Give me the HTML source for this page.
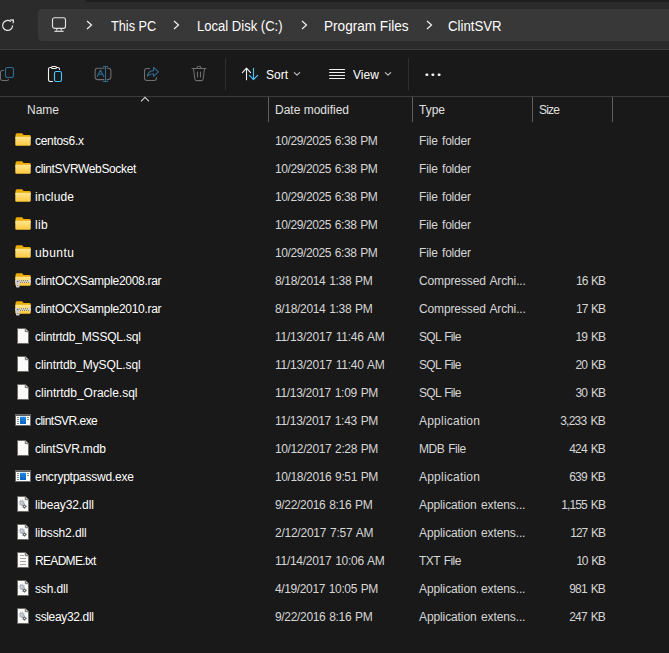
<!DOCTYPE html>
<html><head><meta charset="utf-8">
<style>
*{margin:0;padding:0;box-sizing:border-box}
html,body{width:669px;height:653px;overflow:hidden;background:#191919;font-family:"Liberation Sans",sans-serif;color:#fff}
.abs{position:absolute}
#top{position:absolute;left:0;top:0;width:669px;height:50px;background:#2b2b2b}
#topstrip{position:absolute;left:86px;top:0;width:583px;height:2px;background:#1f1f1f}
#topline{position:absolute;left:0;top:49px;width:669px;height:1px;background:#3a3a3a}
#addr{position:absolute;left:38px;top:9px;width:640px;height:32px;background:#383838;border-radius:4px}
.crumb{position:absolute;top:10px;height:32px;line-height:32px;font-size:14px;color:#fff;white-space:nowrap;transform-origin:0 50%}
.chev{position:absolute}
.ic{position:absolute}
.t{position:absolute;height:28px;line-height:28px;font-size:12px;white-space:nowrap}
.nm{left:35px;color:#fff;letter-spacing:-0.3px}
.dt{left:275px;color:#d6d6d6;word-spacing:0.8px}
.ty{left:419px;color:#d6d6d6;word-spacing:1.2px}
.sz{left:505px;width:100px;text-align:right;color:#d6d6d6;letter-spacing:-0.5px;word-spacing:1.5px}
.hd{position:absolute;top:97px;height:26px;line-height:26px;font-size:12px;color:#e0e0e0}
.vsep{position:absolute;top:97px;width:1px;height:25px;background:#606060}
.tb{position:absolute;font-size:12px;color:#fff}
</style></head><body>
<svg width="0" height="0" style="position:absolute"><defs>
<linearGradient id="eg" x1="0" y1="0" x2="0" y2="1"><stop offset="0" stop-color="#1e88e5"/><stop offset="1" stop-color="#0a62c4"/></linearGradient>
<linearGradient id="fg" x1="0" y1="0" x2="0" y2="1"><stop offset="0" stop-color="#FFE690"/><stop offset="1" stop-color="#FFC83A"/></linearGradient>
</defs></svg>
<div id="top"></div>
<div id="topstrip"></div>
<div id="topline"></div>
<!-- refresh -->
<svg class="abs" style="left:1px;top:19px" width="14" height="14" viewBox="0 0 14 14"><path d="M11.6 6.6 A5 5 0 1 1 9.8 2.6" fill="none" stroke="#f0f0f0" stroke-width="1.2"/><path d="M9.2 0.9 L12.4 1.1 L12.1 4.3" fill="none" stroke="#f0f0f0" stroke-width="1.2"/></svg>
<div id="addr"></div>
<!-- monitor icon -->
<svg class="abs" style="left:51px;top:17px" width="16" height="16" viewBox="0 0 16 16"><rect x="1.5" y="0.7" width="13" height="10.6" rx="2" fill="none" stroke="#e2e2e2" stroke-width="1.15"/><path d="M6 11.3 L5.6 13.6 M10 11.3 L10.4 13.6" stroke="#e2e2e2" stroke-width="1.1" fill="none"/><path d="M3.4 14.3 H12.6" stroke="#e2e2e2" stroke-width="1.2" fill="none"/></svg>
<svg class="abs chev" style="left:86px;top:20px" width="7" height="10" viewBox="0 0 7 10"><path d="M1 1 L5.5 5 L1 9" fill="none" stroke="#f2f2f2" stroke-width="1.2"/></svg>
<div class="crumb" style="left:111px;transform:scaleX(0.91)">This PC</div>
<svg class="abs chev" style="left:173px;top:20px" width="7" height="10" viewBox="0 0 7 10"><path d="M1 1 L5.5 5 L1 9" fill="none" stroke="#f2f2f2" stroke-width="1.2"/></svg>
<div class="crumb" style="left:197px;transform:scaleX(0.932)">Local Disk (C:)</div>
<svg class="abs chev" style="left:301px;top:20px" width="7" height="10" viewBox="0 0 7 10"><path d="M1 1 L5.5 5 L1 9" fill="none" stroke="#f2f2f2" stroke-width="1.2"/></svg>
<div class="crumb" style="left:324px;transform:scaleX(0.97)">Program Files</div>
<svg class="abs chev" style="left:426px;top:20px" width="7" height="10" viewBox="0 0 7 10"><path d="M1 1 L5.5 5 L1 9" fill="none" stroke="#f2f2f2" stroke-width="1.2"/></svg>
<div class="crumb" style="left:448px;transform:scaleX(0.945)">ClintSVR</div>

<!-- toolbar -->
<svg class="abs" style="left:0;top:50px" width="669" height="46" viewBox="0 50 669 46" fill="none" stroke-linecap="round" stroke-linejoin="round">
<!-- copy -->
<path d="M3.5 70.5 H2.5 Q0.5 70.5 0.5 72.5 V78.5 Q0.5 80.5 2.5 80.5 H6.5 Q8.5 80.5 8.5 79.5" stroke="#6e6e6e" stroke-width="1.05"/>
<rect x="5.5" y="67.5" width="8" height="10" rx="2" stroke="#2f6d93" stroke-width="1.05"/>
<!-- paste -->
<path d="M52.5 81.5 H50.2 Q48.5 81.5 48.5 79.8 V69.2 Q48.5 67.5 50.2 67.5 H57.8 Q59.5 67.5 59.5 69.2 V69.5" stroke="#f2f2f2" stroke-width="1.1"/>
<rect x="51.5" y="66.5" width="5" height="2" rx="1" fill="#191919" stroke="#f2f2f2" stroke-width="1.1"/>
<rect x="54.5" y="71.5" width="7" height="10" rx="1.8" stroke="#4cc2ff" stroke-width="1.15"/>
<!-- rename -->
<path d="M104 68.3 H97.6 Q95.1 68.3 95.1 70.8 V77.1 Q95.1 79.6 97.6 79.6 H104" stroke="#6e6e6e" stroke-width="1.05"/>
<path d="M107 68.3 H108.4 Q110.9 68.3 110.9 70.8 V77.1 Q110.9 79.6 108.4 79.6 H107" stroke="#6e6e6e" stroke-width="1.05"/>
<path d="M97.2 76.6 L100.5 70.2 L103.8 76.6 M98.4 74.2 H102.6" stroke="#2f6d93" stroke-width="1.05"/>
<path d="M105.5 66.5 V81.5 M103.3 66.5 H107.7 M103.3 81.5 H107.7" stroke="#2f6d93" stroke-width="1.05"/>
<!-- share -->
<path d="M149.5 68.5 H147 Q144.5 68.5 144.5 71 V78 Q144.5 80.5 147 80.5 H154 Q156.5 80.5 156.5 78 V77.5" stroke="#6e6e6e" stroke-width="1.05"/>
<path d="M147.3 76.2 Q148.3 70.6 153.6 70.6 V67.4 L158.5 71.8 L153.6 76.3 V73.8 Q149.6 73.8 147.3 76.2 Z" stroke="#2f6d93" stroke-width="1.05"/>
<!-- trash -->
<path d="M192 68.5 H206" stroke="#6e6e6e" stroke-width="1.05"/>
<path d="M197 68.3 Q197 66.3 199 66.3 Q201 66.3 201 68.3" stroke="#6e6e6e" stroke-width="1.05"/>
<path d="M193.5 68.8 L194.8 79 Q195 80.6 196.6 80.6 H201.4 Q203 80.6 203.2 79 L204.5 68.8" stroke="#6e6e6e" stroke-width="1.05"/>
<path d="M197.5 72 V77 M200.5 72 V77" stroke="#6e6e6e" stroke-width="1.05"/>
<!-- sort arrows -->
<path d="M246.5 79.8 V68.2 M242.4 72.6 L246.5 68.2 L250.6 72.6" stroke="#f0f0f0" stroke-width="1.1"/>
<path d="M253.5 68.2 V79.6 M249.4 75.4 L253.5 79.6 L257.6 75.4" stroke="#4cc2ff" stroke-width="1.15"/>
<path d="M294.3 72.6 L297 75.2 L299.7 72.6" stroke="#c4c4c4" stroke-width="1.1"/>
<!-- view -->
<path d="M329.6 69.5 H344.6 M329.6 72.5 H344.6 M329.6 75.5 H344.6 M329.6 78.5 H344.6" stroke="#f0f0f0" stroke-width="1.05"/>
<path d="M385.3 72.6 L388 75.2 L390.7 72.6" stroke="#c4c4c4" stroke-width="1.1"/>
<!-- dots -->
<g fill="#f4f4f4" stroke="none"><rect x="425.4" y="73.4" width="3" height="2.6" rx="1.2"/><rect x="431.4" y="73.4" width="3" height="2.6" rx="1.2"/><rect x="437.6" y="73.4" width="3" height="2.6" rx="1.2"/></g>
</svg>
<div class="abs" style="left:225px;top:58px;width:1px;height:32px;background:#2f2f2f"></div>
<div class="tb" style="left:266px;top:68px;line-height:14px">Sort</div>
<div class="tb" style="left:353px;top:68px;line-height:14px">View</div>
<div class="abs" style="left:408px;top:58px;width:1px;height:32px;background:#2f2f2f"></div>

<!-- header -->
<div class="abs" style="left:0;top:96px;width:669px;height:1px;background:#3b3b3b"></div>
<svg class="abs" style="left:140px;top:96px" width="10" height="7" viewBox="0 0 10 7"><path d="M1 5.3 L5 1.3 L9 5.3" fill="none" stroke="#cfcfcf" stroke-width="1.1"/></svg>
<div class="hd" style="left:27px">Name</div>
<div class="vsep" style="left:268px"></div>
<div class="hd" style="left:275px">Date modified</div>
<div class="vsep" style="left:412px"></div>
<div class="hd" style="left:419px">Type</div>
<div class="vsep" style="left:532px"></div>
<div class="hd" style="left:539px;letter-spacing:-0.8px">Size</div>
<div class="vsep" style="left:612px"></div>
<svg class="ic" style="left:15px;top:133px" width="16" height="13" viewBox="0 0 16 13">
<path d="M0.5 2 Q0.5 0.2 2 0.2 H6.6 Q7.4 0.2 7.9 1 L8.6 2 H14.5 Q15.7 2 15.7 3.2 V6 H0.5Z" fill="#EBAA06"/>
<path d="M0.3 3.8 H15.7 V11.6 Q15.7 12.8 14.5 12.8 H1.5 Q0.3 12.8 0.3 11.6Z" fill="url(#fg)"/>
</svg>
<div class="t nm" style="top:127px;letter-spacing:-0.300px">centos6.x</div>
<div class="t dt" style="top:127px;letter-spacing:-0.405px">10/29/2025 6:38 PM</div>
<div class="t ty" style="top:127px;letter-spacing:-0.179px">File folder</div>
<svg class="ic" style="left:15px;top:161px" width="16" height="13" viewBox="0 0 16 13">
<path d="M0.5 2 Q0.5 0.2 2 0.2 H6.6 Q7.4 0.2 7.9 1 L8.6 2 H14.5 Q15.7 2 15.7 3.2 V6 H0.5Z" fill="#EBAA06"/>
<path d="M0.3 3.8 H15.7 V11.6 Q15.7 12.8 14.5 12.8 H1.5 Q0.3 12.8 0.3 11.6Z" fill="url(#fg)"/>
</svg>
<div class="t nm" style="top:155px;letter-spacing:-0.351px">clintSVRWebSocket</div>
<div class="t dt" style="top:155px;letter-spacing:-0.405px">10/29/2025 6:38 PM</div>
<div class="t ty" style="top:155px;letter-spacing:-0.179px">File folder</div>
<svg class="ic" style="left:15px;top:189px" width="16" height="13" viewBox="0 0 16 13">
<path d="M0.5 2 Q0.5 0.2 2 0.2 H6.6 Q7.4 0.2 7.9 1 L8.6 2 H14.5 Q15.7 2 15.7 3.2 V6 H0.5Z" fill="#EBAA06"/>
<path d="M0.3 3.8 H15.7 V11.6 Q15.7 12.8 14.5 12.8 H1.5 Q0.3 12.8 0.3 11.6Z" fill="url(#fg)"/>
</svg>
<div class="t nm" style="top:183px;letter-spacing:0.165px">include</div>
<div class="t dt" style="top:183px;letter-spacing:-0.405px">10/29/2025 6:38 PM</div>
<div class="t ty" style="top:183px;letter-spacing:-0.179px">File folder</div>
<svg class="ic" style="left:15px;top:217px" width="16" height="13" viewBox="0 0 16 13">
<path d="M0.5 2 Q0.5 0.2 2 0.2 H6.6 Q7.4 0.2 7.9 1 L8.6 2 H14.5 Q15.7 2 15.7 3.2 V6 H0.5Z" fill="#EBAA06"/>
<path d="M0.3 3.8 H15.7 V11.6 Q15.7 12.8 14.5 12.8 H1.5 Q0.3 12.8 0.3 11.6Z" fill="url(#fg)"/>
</svg>
<div class="t nm" style="top:211px;letter-spacing:0.375px">lib</div>
<div class="t dt" style="top:211px;letter-spacing:-0.405px">10/29/2025 6:38 PM</div>
<div class="t ty" style="top:211px;letter-spacing:-0.179px">File folder</div>
<svg class="ic" style="left:15px;top:245px" width="16" height="13" viewBox="0 0 16 13">
<path d="M0.5 2 Q0.5 0.2 2 0.2 H6.6 Q7.4 0.2 7.9 1 L8.6 2 H14.5 Q15.7 2 15.7 3.2 V6 H0.5Z" fill="#EBAA06"/>
<path d="M0.3 3.8 H15.7 V11.6 Q15.7 12.8 14.5 12.8 H1.5 Q0.3 12.8 0.3 11.6Z" fill="url(#fg)"/>
</svg>
<div class="t nm" style="top:239px;letter-spacing:0.438px">ubuntu</div>
<div class="t dt" style="top:239px;letter-spacing:-0.405px">10/29/2025 6:38 PM</div>
<div class="t ty" style="top:239px;letter-spacing:-0.179px">File folder</div>
<svg class="ic" style="left:15px;top:273px" width="16" height="15" viewBox="0 0 16 15">
<path d="M0.5 2 Q0.5 0.2 2 0.2 H6.6 Q7.4 0.2 7.9 1 L8.6 2 H14.5 Q15.7 2 15.7 3.2 V6 H0.5Z" fill="#EBAA06"/>
<path d="M0.3 3.8 H15.7 V11.6 Q15.7 12.8 14.5 12.8 H1.5 Q0.3 12.8 0.3 11.6Z" fill="url(#fg)"/>
<rect x="0.3" y="7" width="15.4" height="3" fill="#d8d8dc"/>
<g fill="#8f6f1c"><rect x="4" y="7.2" width="1" height="1"/><rect x="6" y="7.2" width="1" height="1"/><rect x="8" y="7.2" width="1" height="1"/><rect x="10" y="7.2" width="1" height="1"/><rect x="12" y="7.2" width="1" height="1"/>
<rect x="5" y="8.9" width="1" height="1"/><rect x="7" y="8.9" width="1" height="1"/><rect x="9" y="8.9" width="1" height="1"/><rect x="11" y="8.9" width="1" height="1"/><rect x="13" y="8.9" width="1" height="1"/></g>
<rect x="1" y="7" width="3.5" height="7.5" rx="0.8" fill="#d0d0d4"/>
<circle cx="2.7" cy="8.5" r="0.7" fill="#555"/><circle cx="2.7" cy="12.5" r="0.6" fill="#8a6a20"/>
</svg>
<div class="t nm" style="top:267px;letter-spacing:-0.291px">clintOCXSample2008.rar</div>
<div class="t dt" style="top:267px;letter-spacing:-0.327px">8/18/2014 1:38 PM</div>
<div class="t ty" style="top:267px;letter-spacing:-0.130px">Compressed Archi...</div>
<div class="t sz" style="top:267px;letter-spacing:-1.062px">16 KB</div>
<svg class="ic" style="left:15px;top:301px" width="16" height="15" viewBox="0 0 16 15">
<path d="M0.5 2 Q0.5 0.2 2 0.2 H6.6 Q7.4 0.2 7.9 1 L8.6 2 H14.5 Q15.7 2 15.7 3.2 V6 H0.5Z" fill="#EBAA06"/>
<path d="M0.3 3.8 H15.7 V11.6 Q15.7 12.8 14.5 12.8 H1.5 Q0.3 12.8 0.3 11.6Z" fill="url(#fg)"/>
<rect x="0.3" y="7" width="15.4" height="3" fill="#d8d8dc"/>
<g fill="#8f6f1c"><rect x="4" y="7.2" width="1" height="1"/><rect x="6" y="7.2" width="1" height="1"/><rect x="8" y="7.2" width="1" height="1"/><rect x="10" y="7.2" width="1" height="1"/><rect x="12" y="7.2" width="1" height="1"/>
<rect x="5" y="8.9" width="1" height="1"/><rect x="7" y="8.9" width="1" height="1"/><rect x="9" y="8.9" width="1" height="1"/><rect x="11" y="8.9" width="1" height="1"/><rect x="13" y="8.9" width="1" height="1"/></g>
<rect x="1" y="7" width="3.5" height="7.5" rx="0.8" fill="#d0d0d4"/>
<circle cx="2.7" cy="8.5" r="0.7" fill="#555"/><circle cx="2.7" cy="12.5" r="0.6" fill="#8a6a20"/>
</svg>
<div class="t nm" style="top:295px;letter-spacing:-0.291px">clintOCXSample2010.rar</div>
<div class="t dt" style="top:295px;letter-spacing:-0.327px">8/18/2014 1:38 PM</div>
<div class="t ty" style="top:295px;letter-spacing:-0.130px">Compressed Archi...</div>
<div class="t sz" style="top:295px;letter-spacing:-1.062px">17 KB</div>
<svg class="ic" style="left:17px;top:328px" width="12" height="16" viewBox="0 0 12 16">
<path d="M0.5 0.5 H8.3 L11.5 3.7 V15.5 H0.5Z" fill="#fafafa" stroke="#6e6a66" stroke-width="1"/>
<path d="M8.3 0.5 V3.7 H11.5" fill="#d0d0d0" stroke="#6e6a66" stroke-width="1"/>
</svg>
<div class="t nm" style="top:323px;letter-spacing:-0.190px">clintrtdb_MSSQL.sql</div>
<div class="t dt" style="top:323px;letter-spacing:-0.235px">11/13/2017 11:46 AM</div>
<div class="t ty" style="top:323px;letter-spacing:-0.723px">SQL File</div>
<div class="t sz" style="top:323px;letter-spacing:-0.950px">19 KB</div>
<svg class="ic" style="left:17px;top:356px" width="12" height="16" viewBox="0 0 12 16">
<path d="M0.5 0.5 H8.3 L11.5 3.7 V15.5 H0.5Z" fill="#fafafa" stroke="#6e6a66" stroke-width="1"/>
<path d="M8.3 0.5 V3.7 H11.5" fill="#d0d0d0" stroke="#6e6a66" stroke-width="1"/>
</svg>
<div class="t nm" style="top:351px;letter-spacing:-0.090px">clintrtdb_MySQL.sql</div>
<div class="t dt" style="top:351px;letter-spacing:-0.235px">11/13/2017 11:40 AM</div>
<div class="t ty" style="top:351px;letter-spacing:-0.723px">SQL File</div>
<div class="t sz" style="top:351px;letter-spacing:-0.950px">20 KB</div>
<svg class="ic" style="left:17px;top:384px" width="12" height="16" viewBox="0 0 12 16">
<path d="M0.5 0.5 H8.3 L11.5 3.7 V15.5 H0.5Z" fill="#fafafa" stroke="#6e6a66" stroke-width="1"/>
<path d="M8.3 0.5 V3.7 H11.5" fill="#d0d0d0" stroke="#6e6a66" stroke-width="1"/>
</svg>
<div class="t nm" style="top:379px;letter-spacing:-0.011px">clintrtdb_Oracle.sql</div>
<div class="t dt" style="top:379px;letter-spacing:-0.321px">11/13/2017 1:09 PM</div>
<div class="t ty" style="top:379px;letter-spacing:-0.723px">SQL File</div>
<div class="t sz" style="top:379px;letter-spacing:-0.950px">30 KB</div>
<svg class="ic" style="left:15px;top:414px" width="16" height="12" viewBox="0 0 16 12">
<rect x="0.5" y="0.5" width="15" height="11" fill="#fcfcfc" stroke="#6b6763" stroke-width="1"/>
<rect x="1" y="1" width="14" height="1" fill="#5c5c5c"/>
<rect x="5" y="2.8" width="6" height="7.2" rx="0.6" fill="url(#eg)"/>
<g fill="#8c8c8c"><rect x="2" y="3" width="2" height="1"/><rect x="2" y="5" width="2" height="1"/><rect x="2" y="7" width="2" height="1"/><rect x="2" y="9" width="2" height="1"/>
<rect x="12" y="3" width="2" height="1"/><rect x="12" y="5" width="2" height="1"/></g>
</svg>
<div class="t nm" style="top:407px;letter-spacing:-0.537px">clintSVR.exe</div>
<div class="t dt" style="top:407px;letter-spacing:-0.321px">11/13/2017 1:43 PM</div>
<div class="t ty" style="top:407px;letter-spacing:0.217px">Application</div>
<div class="t sz" style="top:407px;letter-spacing:-0.757px">3,233 KB</div>
<svg class="ic" style="left:17px;top:440px" width="12" height="16" viewBox="0 0 12 16">
<path d="M0.5 0.5 H8.3 L11.5 3.7 V15.5 H0.5Z" fill="#fafafa" stroke="#6e6a66" stroke-width="1"/>
<path d="M8.3 0.5 V3.7 H11.5" fill="#d0d0d0" stroke="#6e6a66" stroke-width="1"/>
</svg>
<div class="t nm" style="top:435px;letter-spacing:-0.169px">clintSVR.mdb</div>
<div class="t dt" style="top:435px;letter-spacing:-0.374px">10/12/2017 2:28 PM</div>
<div class="t ty" style="top:435px;letter-spacing:-0.491px">MDB File</div>
<div class="t sz" style="top:435px;letter-spacing:-0.860px">424 KB</div>
<svg class="ic" style="left:15px;top:470px" width="16" height="12" viewBox="0 0 16 12">
<rect x="0.5" y="0.5" width="15" height="11" fill="#fcfcfc" stroke="#6b6763" stroke-width="1"/>
<rect x="1" y="1" width="14" height="1" fill="#5c5c5c"/>
<rect x="5" y="2.8" width="6" height="7.2" rx="0.6" fill="url(#eg)"/>
<g fill="#8c8c8c"><rect x="2" y="3" width="2" height="1"/><rect x="2" y="5" width="2" height="1"/><rect x="2" y="7" width="2" height="1"/><rect x="2" y="9" width="2" height="1"/>
<rect x="12" y="3" width="2" height="1"/><rect x="12" y="5" width="2" height="1"/></g>
</svg>
<div class="t nm" style="top:463px;letter-spacing:-0.238px">encryptpasswd.exe</div>
<div class="t dt" style="top:463px;letter-spacing:-0.374px">10/18/2016 9:51 PM</div>
<div class="t ty" style="top:463px;letter-spacing:0.217px">Application</div>
<div class="t sz" style="top:463px;letter-spacing:-0.860px">639 KB</div>
<svg class="ic" style="left:17px;top:496px" width="12" height="16" viewBox="0 0 12 16">
<path d="M0.5 0.5 H8.3 L11.5 3.7 V15.5 H0.5Z" fill="#fafafa" stroke="#6e6a66" stroke-width="1"/>
<path d="M8.3 0.5 V3.7 H11.5" fill="#d0d0d0" stroke="#6e6a66" stroke-width="1"/>
<circle cx="4.85" cy="6.85" r="2.3" fill="#a9b0b9"/>
<circle cx="4.85" cy="6.85" r="2.75" fill="none" stroke="#a9b0b9" stroke-width="1" stroke-dasharray="1.05 1.11"/>
<circle cx="4.85" cy="6.85" r="0.95" fill="#e4e6e8"/>
<circle cx="7.4" cy="10.4" r="1.55" fill="#50555c"/>
<circle cx="7.4" cy="10.4" r="1.9" fill="none" stroke="#50555c" stroke-width="0.8" stroke-dasharray="0.9 1.09"/>
<circle cx="7.4" cy="10.4" r="0.65" fill="#fafafa"/>
</svg>
<div class="t nm" style="top:491px;letter-spacing:-0.104px">libeay32.dll</div>
<div class="t dt" style="top:491px;letter-spacing:-0.327px">9/22/2016 8:16 PM</div>
<div class="t ty" style="top:491px;letter-spacing:-0.107px">Application extens...</div>
<div class="t sz" style="top:491px;letter-spacing:-0.899px">1,155 KB</div>
<svg class="ic" style="left:17px;top:524px" width="12" height="16" viewBox="0 0 12 16">
<path d="M0.5 0.5 H8.3 L11.5 3.7 V15.5 H0.5Z" fill="#fafafa" stroke="#6e6a66" stroke-width="1"/>
<path d="M8.3 0.5 V3.7 H11.5" fill="#d0d0d0" stroke="#6e6a66" stroke-width="1"/>
<circle cx="4.85" cy="6.85" r="2.3" fill="#a9b0b9"/>
<circle cx="4.85" cy="6.85" r="2.75" fill="none" stroke="#a9b0b9" stroke-width="1" stroke-dasharray="1.05 1.11"/>
<circle cx="4.85" cy="6.85" r="0.95" fill="#e4e6e8"/>
<circle cx="7.4" cy="10.4" r="1.55" fill="#50555c"/>
<circle cx="7.4" cy="10.4" r="1.9" fill="none" stroke="#50555c" stroke-width="0.8" stroke-dasharray="0.9 1.09"/>
<circle cx="7.4" cy="10.4" r="0.65" fill="#fafafa"/>
</svg>
<div class="t nm" style="top:519px;letter-spacing:-0.093px">libssh2.dll</div>
<div class="t dt" style="top:519px;letter-spacing:-0.248px">2/12/2017 7:57 AM</div>
<div class="t ty" style="top:519px;letter-spacing:-0.107px">Application extens...</div>
<div class="t sz" style="top:519px;letter-spacing:-1.022px">127 KB</div>
<svg class="ic" style="left:17px;top:552px" width="12" height="16" viewBox="0 0 12 16">
<path d="M0.5 0.5 H8.3 L11.5 3.7 V15.5 H0.5Z" fill="#fafafa" stroke="#6e6a66" stroke-width="1"/>
<path d="M8.3 0.5 V3.7 H11.5" fill="#d0d0d0" stroke="#6e6a66" stroke-width="1"/>
<g fill="#8a8a8a"><rect x="3" y="3" width="4" height="0.8"/><rect x="3" y="6" width="6" height="0.8"/><rect x="3" y="9" width="6" height="0.8"/><rect x="3" y="12" width="6" height="0.8"/></g>
</svg>
<div class="t nm" style="top:547px;letter-spacing:-0.680px">README.txt</div>
<div class="t dt" style="top:547px;letter-spacing:-0.285px">11/14/2017 10:06 AM</div>
<div class="t ty" style="top:547px;letter-spacing:-0.569px">TXT File</div>
<div class="t sz" style="top:547px;letter-spacing:-1.085px">10 KB</div>
<svg class="ic" style="left:17px;top:580px" width="12" height="16" viewBox="0 0 12 16">
<path d="M0.5 0.5 H8.3 L11.5 3.7 V15.5 H0.5Z" fill="#fafafa" stroke="#6e6a66" stroke-width="1"/>
<path d="M8.3 0.5 V3.7 H11.5" fill="#d0d0d0" stroke="#6e6a66" stroke-width="1"/>
<circle cx="4.85" cy="6.85" r="2.3" fill="#a9b0b9"/>
<circle cx="4.85" cy="6.85" r="2.75" fill="none" stroke="#a9b0b9" stroke-width="1" stroke-dasharray="1.05 1.11"/>
<circle cx="4.85" cy="6.85" r="0.95" fill="#e4e6e8"/>
<circle cx="7.4" cy="10.4" r="1.55" fill="#50555c"/>
<circle cx="7.4" cy="10.4" r="1.9" fill="none" stroke="#50555c" stroke-width="0.8" stroke-dasharray="0.9 1.09"/>
<circle cx="7.4" cy="10.4" r="0.65" fill="#fafafa"/>
</svg>
<div class="t nm" style="top:575px;letter-spacing:-0.135px">ssh.dll</div>
<div class="t dt" style="top:575px;letter-spacing:-0.374px">4/19/2017 10:05 PM</div>
<div class="t ty" style="top:575px;letter-spacing:-0.107px">Application extens...</div>
<div class="t sz" style="top:575px;letter-spacing:-0.860px">981 KB</div>
<svg class="ic" style="left:17px;top:608px" width="12" height="16" viewBox="0 0 12 16">
<path d="M0.5 0.5 H8.3 L11.5 3.7 V15.5 H0.5Z" fill="#fafafa" stroke="#6e6a66" stroke-width="1"/>
<path d="M8.3 0.5 V3.7 H11.5" fill="#d0d0d0" stroke="#6e6a66" stroke-width="1"/>
<circle cx="4.85" cy="6.85" r="2.3" fill="#a9b0b9"/>
<circle cx="4.85" cy="6.85" r="2.75" fill="none" stroke="#a9b0b9" stroke-width="1" stroke-dasharray="1.05 1.11"/>
<circle cx="4.85" cy="6.85" r="0.95" fill="#e4e6e8"/>
<circle cx="7.4" cy="10.4" r="1.55" fill="#50555c"/>
<circle cx="7.4" cy="10.4" r="1.9" fill="none" stroke="#50555c" stroke-width="0.8" stroke-dasharray="0.9 1.09"/>
<circle cx="7.4" cy="10.4" r="0.65" fill="#fafafa"/>
</svg>
<div class="t nm" style="top:603px;letter-spacing:-0.349px">ssleay32.dll</div>
<div class="t dt" style="top:603px;letter-spacing:-0.327px">9/22/2016 8:16 PM</div>
<div class="t ty" style="top:603px;letter-spacing:-0.107px">Application extens...</div>
<div class="t sz" style="top:603px;letter-spacing:-0.860px">247 KB</div>
</body></html>
